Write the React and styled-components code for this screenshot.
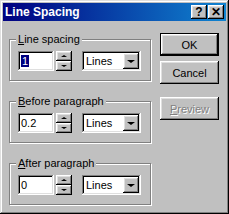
import React from "react";
import styled, { createGlobalStyle } from "styled-components";

const Global = createGlobalStyle`
  html, body { margin: 0; padding: 0; background: #c0c0c0; }
  body { font-family: "Liberation Sans", Arial, sans-serif; font-size: 11px; color: #000; }
`;

const raised = `
  background: #c0c0c0;
  box-shadow: inset -1px -1px #000, inset 1px 1px #fff, inset -2px -2px #808080, inset 2px 2px #dfdfdf;
`;

const sunken = `
  background: #fff;
  box-shadow: inset -1px -1px #fff, inset 1px 1px #808080, inset -2px -2px #dfdfdf, inset 2px 2px #000;
`;

const Window = styled.div`
  width: 229px;
  height: 214px;
  box-sizing: border-box;
  padding: 3px;
  background: #c0c0c0;
  box-shadow: inset -1px -1px #000, inset 1px 1px #dfdfdf, inset -2px -2px #808080, inset 2px 2px #fff;
  display: flex;
  flex-direction: column;
`;

const TitleBar = styled.div`
  height: 18px;
  background: linear-gradient(90deg, #000080, #1084d0);
  display: flex;
  align-items: center;
  padding: 0 2px;
`;

const Title = styled.span`
  flex: 1;
  color: #fff;
  font-weight: bold;
  font-size: 12px;
`;

const TitleButtons = styled.div`
  display: flex;
  gap: 1px;
`;

const TitleButton = styled.div`
  ${raised}
  width: 16px;
  height: 14px;
  display: flex;
  align-items: center;
  justify-content: center;
  font-weight: bold;
  font-size: 12px;
  line-height: 1;
`;

const Body = styled.div`
  display: flex;
  padding: 12px 0 0 6px;
  gap: 9px;
`;

const Groups = styled.div`
  width: 142px;
  display: flex;
  flex-direction: column;
  gap: 20px;
  padding-top: 6px;
`;

const Group = styled.div`
  position: relative;
  height: 42px;
  box-sizing: border-box;
  border: 1px solid #808080;
  box-shadow: inset 1px 1px #fff, 1px 1px #fff;
  padding: 11px 0 0 8px;
`;

const GroupLabel = styled.span`
  position: absolute;
  top: -7px;
  left: 6px;
  padding: 0 2px;
  background: #c0c0c0;
  line-height: 13px;
`;

const Key = styled.span`
  text-decoration: underline;
`;

const Row = styled.div`
  display: flex;
  align-items: center;
`;

const Edit = styled.div`
  ${sunken}
  width: 36px;
  height: 20px;
  box-sizing: border-box;
  padding: 3px 3px 0;
  line-height: 14px;
`;

const Selected = styled.span`
  background: #000080;
  color: #fff;
  padding: 0 1px;
`;

const Spin = styled.div`
  width: 16px;
  height: 20px;
  margin-left: 2px;
  display: flex;
  flex-direction: column;
`;

const SpinButton = styled.div`
  ${raised}
  flex: 1;
  display: flex;
  align-items: center;
  justify-content: center;
`;

const Arrow = styled.div`
  width: 0;
  height: 0;
  border-left: ${(p) => p.size}px solid transparent;
  border-right: ${(p) => p.size}px solid transparent;
  ${(p) => (p.up ? "border-bottom" : "border-top")}: ${(p) => p.size - 1}px solid #000;
`;

const Select = styled.div`
  ${sunken}
  width: 59px;
  height: 20px;
  box-sizing: border-box;
  margin-left: 10px;
  padding: 2px;
  display: flex;
  align-items: center;
`;

const SelectText = styled.span`
  flex: 1;
  padding-left: 2px;
`;

const DropButton = styled.div`
  ${raised}
  width: 16px;
  height: 16px;
  display: flex;
  align-items: center;
  justify-content: center;
`;

const Buttons = styled.div`
  width: 59px;
  display: flex;
  flex-direction: column;
  padding-top: 0;
`;

const Button = styled.div`
  ${raised}
  height: ${(p) => (p.isDefault ? 21 : 23)}px;
  display: flex;
  align-items: center;
  justify-content: center;
  margin-top: ${(p) => p.top}px;
  color: ${(p) => (p.disabled ? "#808080" : "#000")};
  text-shadow: ${(p) => (p.disabled ? "1px 1px #fff" : "none")};
  border: ${(p) => (p.isDefault ? "1px solid #000" : "none")};
`;

const groups = [
  { key: "L", rest: "ine spacing", value: "1", selected: true },
  { key: "B", rest: "efore paragraph", value: "0.2" },
  { key: "A", rest: "fter paragraph", value: "0" },
];

export default function App() {
  return (
    <>
      <Global />
      <Window>
        <TitleBar>
          <Title>Line Spacing</Title>
          <TitleButtons>
            <TitleButton>?</TitleButton>
            <TitleButton>✕</TitleButton>
          </TitleButtons>
        </TitleBar>
        <Body>
          <Groups>
            {groups.map((g) => (
              <Group key={g.key}>
                <GroupLabel>
                  <Key>{g.key}</Key>
                  {g.rest}
                </GroupLabel>
                <Row>
                  <Edit>{g.selected ? <Selected>{g.value}</Selected> : g.value}</Edit>
                  <Spin>
                    <SpinButton>
                      <Arrow up size={3} />
                    </SpinButton>
                    <SpinButton>
                      <Arrow size={3} />
                    </SpinButton>
                  </Spin>
                  <Select>
                    <SelectText>Lines</SelectText>
                    <DropButton>
                      <Arrow size={4} />
                    </DropButton>
                  </Select>
                </Row>
              </Group>
            ))}
          </Groups>
          <Buttons>
            <Button isDefault top={0}>OK</Button>
            <Button top={5}>Cancel</Button>
            <Button disabled top={13}>
              <Key>P</Key>review
            </Button>
          </Buttons>
        </Body>
      </Window>
    </>
  );
}
